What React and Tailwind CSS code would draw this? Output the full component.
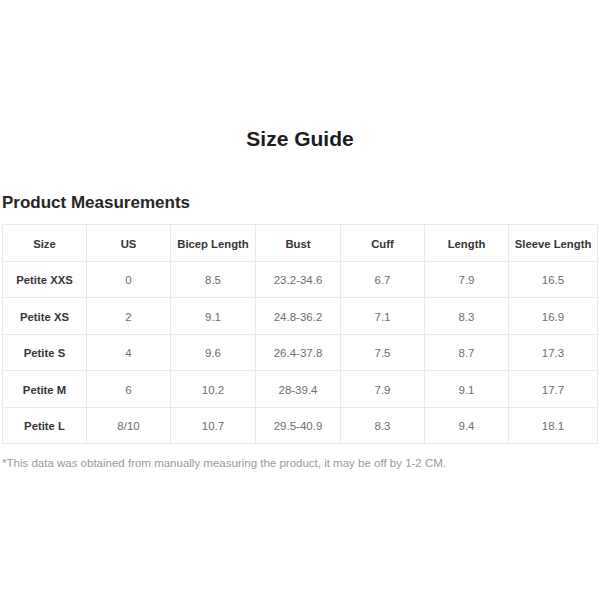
import React from "react";

const headers = ["Size", "US", "Bicep Length", "Bust", "Cuff", "Length", "Sleeve Length"];
const rows = [
  ["Petite XXS", "0", "8.5", "23.2-34.6", "6.7", "7.9", "16.5"],
  ["Petite XS", "2", "9.1", "24.8-36.2", "7.1", "8.3", "16.9"],
  ["Petite S", "4", "9.6", "26.4-37.8", "7.5", "8.7", "17.3"],
  ["Petite M", "6", "10.2", "28-39.4", "7.9", "9.1", "17.7"],
  ["Petite L", "8/10", "10.7", "29.5-40.9", "8.3", "9.4", "18.1"],
];
const widths = [84, 84, 85, 85, 84, 84, 89];

export default function App() {
  return (
    <div
      className="w-[600px] h-[600px] bg-white overflow-hidden"
      style={{ fontFamily: '"Liberation Sans", Arial, sans-serif' }}
    >
      <div className="pt-[127px] text-center text-[21px] leading-[24px] font-bold text-[#1c1c1c]">
        Size Guide
      </div>
      <div className="mt-[42px] pl-[2px] text-[17px] leading-[20px] font-bold text-[#262626]">
        Product Measurements
      </div>
      <div className="mt-[11px] pl-[2px]">
        <table className="table-fixed border-collapse w-[595px]">
          <colgroup>
            {widths.map((w, i) => (
              <col key={i} style={{ width: w }} />
            ))}
          </colgroup>
          <thead>
            <tr>
              {headers.map((h) => (
                <th
                  key={h}
                  className="h-[36.5px] p-0 pt-[3px] border border-[#e9e9e9] text-center align-middle text-[11.3px] font-bold text-[#363636]"
                >
                  {h}
                </th>
              ))}
            </tr>
          </thead>
          <tbody>
            {rows.map((r) => (
              <tr key={r[0]}>
                {r.map((c, i) => (
                  <td
                    key={i}
                    className={
                      i === 0
                        ? "h-[36.5px] p-0 pt-[3px] border border-[#e9e9e9] text-center align-middle text-[11.3px] font-bold text-[#363636]"
                        : "h-[36.5px] p-0 pt-[3px] border border-[#e9e9e9] text-center align-middle text-[11.5px] text-[#6e6e6e]"
                    }
                  >
                    {c}
                  </td>
                ))}
              </tr>
            ))}
          </tbody>
        </table>
      </div>
      <div className="mt-[12px] pl-[2px] text-[11.5px] leading-[14px] text-[#9a9a9a]">
        *This data was obtained from manually measuring the product, it may be off by 1-2 CM.
      </div>
    </div>
  );
}
